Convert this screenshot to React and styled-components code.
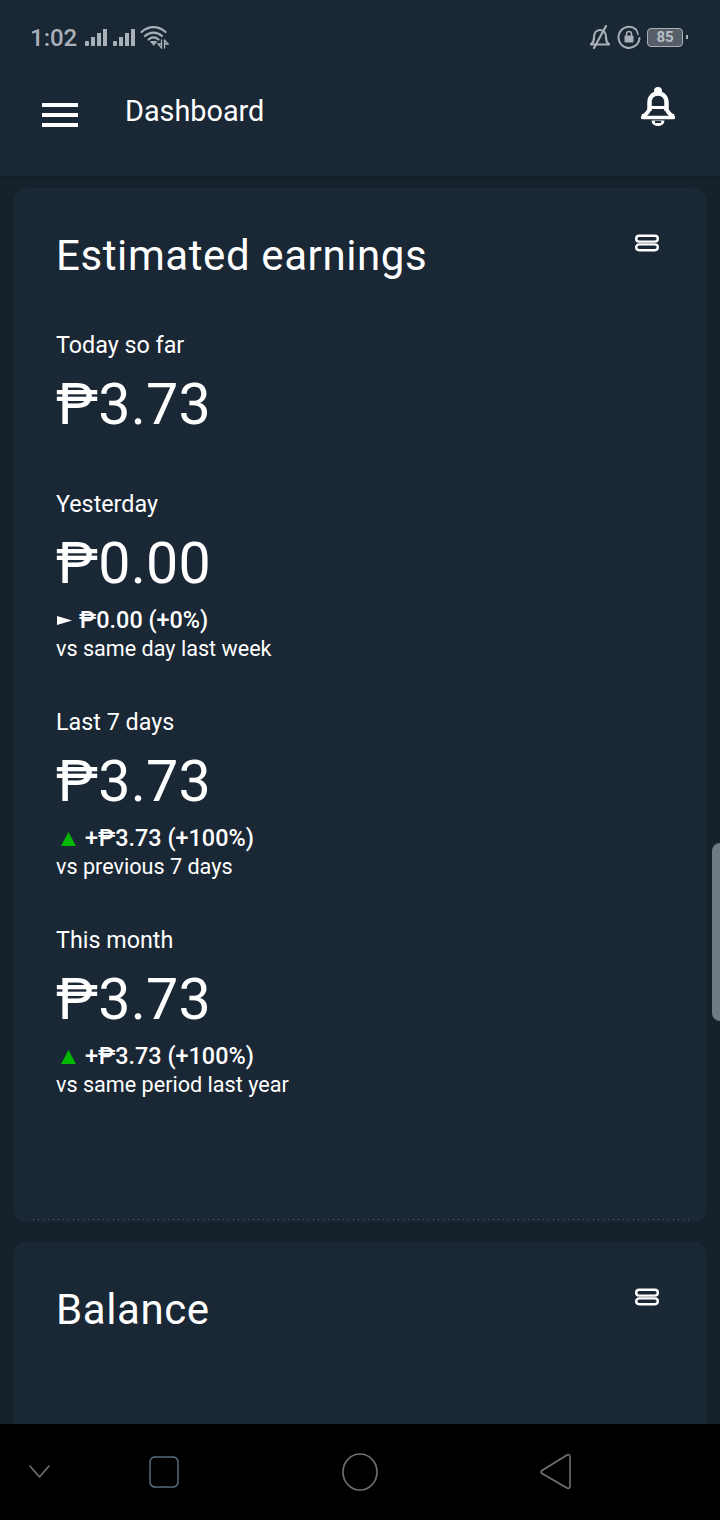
import React from "react";
import styled, { createGlobalStyle } from "styled-components";

const GlobalStyle = createGlobalStyle`
  html, body {
    margin: 0;
    padding: 0;
    background: #16212c;
  }
  body {
    font-family: Roboto, "Liberation Sans", sans-serif;
    color: #fff;
  }
`;

const Screen = styled.div`
  position: relative;
  width: 720px;
  height: 1520px;
  display: flex;
  flex-direction: column;
  overflow: hidden;
  background: #16212c;
`;

const Header = styled.header`
  height: 176px;
  flex: none;
  background: #1a2735;
  display: flex;
  flex-direction: column;
  box-shadow: 0 2px 4px rgba(0, 0, 0, 0.12);
`;

const StatusBar = styled.div`
  height: 72px;
  padding: 2px 31px 0 30px;
  box-sizing: border-box;
  display: flex;
  align-items: center;
  justify-content: space-between;
  color: #a9b0b8;
`;

const StatusGroup = styled.div`
  display: flex;
  align-items: center;
  gap: ${(p) => p.$gap || 5}px;
`;

const Clock = styled.span`
  font-size: 24px;
  font-weight: 500;
  margin-right: 3px;
  padding-top: 2px;
`;

const Battery = styled.div`
  position: relative;
  width: 36px;
  height: 19px;
  box-sizing: border-box;
  border: 1.5px solid #a9b0b8;
  border-radius: 4px;
  background: #565f68;
  color: #b9bfc5;
  font-size: 15px;
  font-weight: 700;
  line-height: 16px;
  text-align: center;
  margin-right: 6px;
  &::after {
    content: "";
    position: absolute;
    right: -6px;
    top: 6px;
    width: 2px;
    height: 4px;
    background: #a9b0b8;
  }
`;

const AppBar = styled.div`
  height: 78px;
  padding: 0 45px 0 42px;
  display: flex;
  align-items: center;
`;

const Menu = styled.div`
  width: 36px;
  display: flex;
  flex-direction: column;
  gap: 6px;
  margin-right: 47px;
  margin-top: 8px;
  span {
    height: 4px;
    background: #fff;
  }
`;

const PageTitle = styled.div`
  flex: 1;
  font-size: 28.8px;
  line-height: 34px;
`;

const Content = styled.main`
  flex: 1;
  min-height: 0;
  overflow: hidden;
  padding: 12px 13px 0;
  display: flex;
  flex-direction: column;
  gap: 20px;
`;

const Card = styled.section`
  position: relative;
  flex: none;
  box-sizing: border-box;
  height: ${(p) => p.$height}px;
  background: #1a2735;
  border-radius: 14px;
  padding: 44px 43px 0;
`;

const DottedEdge = styled.div`
  position: absolute;
  left: 20px;
  right: 17px;
  bottom: 2px;
  height: 1px;
  background: repeating-linear-gradient(90deg, #5a6874 0 1px, transparent 1px 5px);
`;

const CardTitle = styled.h2`
  margin: 0;
  font-size: 42px;
  font-weight: 400;
  line-height: 48px;
  letter-spacing: 0.6px;
`;

const Collapse = styled.svg`
  position: absolute;
  top: 46px;
  right: 48px;
`;

const Metric = styled.div`
  margin-top: ${(p) => p.$top}px;
`;

const Label = styled.div`
  font-size: 23.3px;
  line-height: 28px;
`;

const Amount = styled.div`
  font-size: 57.4px;
  line-height: 66px;
  margin-top: 13px;
  letter-spacing: 0.2px;
`;

const Delta = styled.div`
  display: flex;
  align-items: center;
  font-size: 23.4px;
  font-weight: 500;
  line-height: 29px;
  margin-top: 9px;
`;

const Arrow = styled.svg`
  flex: none;
  margin-right: ${(p) => p.$gap}px;
  margin-left: ${(p) => p.$left}px;
`;

const Note = styled.div`
  font-size: 21.6px;
  line-height: 28px;
`;

const Scrollbar = styled.div`
  position: absolute;
  right: 0;
  top: 843px;
  width: 8px;
  height: 178px;
  background: #6f7a84;
  border-radius: 8px 0 0 8px;
`;

const NavBar = styled.nav`
  height: 96px;
  flex: none;
  background: #000;
  display: grid;
  grid-template-columns: 80px 168px 224px 168px 80px;
  align-items: center;
  justify-items: center;
`;

const NavIcon = styled.svg`
  fill: none;
  stroke: ${(p) => p.$stroke || "#6f7276"};
  stroke-width: 1.6;
  stroke-linecap: round;
  stroke-linejoin: round;
`;

const Signal = () => (
  <svg width="24" height="20" viewBox="0 0 24 20" fill="#a9b0b8">
    <rect x="1" y="14" width="4" height="5" rx="1" />
    <rect x="7" y="10" width="4" height="9" />
    <rect x="13" y="6" width="4" height="13" />
    <rect x="19" y="2" width="4" height="17" />
  </svg>
);

const Wifi = () => (
  <svg width="30" height="24" viewBox="0 0 30 24" fill="none" stroke="#a9b0b8" strokeWidth="2.2" strokeLinecap="round">
    <path d="M1.500 7C8.500 0.500 18.500 0.500 25.500 7" />
    <path d="M5 11C10 6.500 17 6.500 22 11" />
    <path d="M8.500 14.500C11.500 12 15.500 12 18.500 14.500" />
    <path d="M13.500 20l-3-3.500h6z" fill="#a9b0b8" strokeWidth="1" />
    <path d="M21.500 15v8l-3.500-4h3.500M24.500 15v8M24.500 15l3.500 4h-3.500" strokeWidth="1.300" />
  </svg>
);

const BellMuted = () => (
  <svg width="22" height="24" viewBox="0 0 22 24" fill="none" stroke="#a9b0b8" strokeWidth="2.2" strokeLinecap="round" strokeLinejoin="round">
    <path d="M2 19.500c2-1.500 3-3.500 3-7 0-4 2.200-7.500 6-7.500s6 3.500 6 7.500c0 3.500 1 5.500 3 7z" />
    <path d="M17 1L5 23" />
  </svg>
);

const RotationLock = () => (
  <svg width="24" height="24" viewBox="0 0 24 24" fill="none" stroke="#a9b0b8" strokeWidth="2" strokeLinecap="round">
    <path d="M19 4.500A10.500 10.500 0 1 0 22.500 13" />
    <path d="M21 9.500a10 10 0 0 0-1.500-4" strokeWidth="1.500" />
    <rect x="7.500" y="10.500" width="9" height="7" rx="1" fill="#a9b0b8" stroke="none" />
    <path d="M9.500 10.500V9a2.500 2.500 0 0 1 5 0v1.500" strokeWidth="1.500" />
  </svg>
);

const BellLarge = () => (
  <svg width="34" height="40" viewBox="0 0 34 40" fill="none" stroke="#fff" strokeLinejoin="round" style={{ marginBottom: 8 }}>
    <circle cx="17" cy="4" r="4" fill="#fff" stroke="none" />
    <path d="M8.500 24V15.500C8.500 10 12 6.500 17 6.500s8.500 3.500 8.500 9V24" strokeWidth="4.500" />
    <path d="M1 29.500c3-1 5.500-3 7-6.500M33 29.500c-3-1-5.500-3-7-6.500" strokeWidth="4" />
    <path d="M8 20.500h18" strokeWidth="3" />
    <path d="M1.500 30.500h31" strokeWidth="3.500" strokeLinecap="round" />
    <path d="M10.500 33.500a6.500 5.500 0 0 0 13 0z" fill="#fff" strokeWidth="0" />
    <path d="M14 35h6" stroke="#1a2735" strokeWidth="2" />
  </svg>
);

const StackIcon = () => (
  <Collapse width="24" height="18" viewBox="0 0 24 18" fill="none" stroke="#fff" strokeWidth="2.4">
    <rect x="1.200" y="1.800" width="21.600" height="5.800" rx="2.900" />
    <rect x="1.200" y="10.400" width="21.600" height="5.800" rx="2.900" />
  </Collapse>
);

const earnings = [
  { label: "Today so far", amount: "₱3.73", top: 51 },
  { label: "Yesterday", amount: "₱0.00", top: 52, delta: "₱0.00 (+0%)", note: "vs same day last week", trend: "flat" },
  { label: "Last 7 days", amount: "₱3.73", top: 45, delta: "+₱3.73 (+100%)", note: "vs previous 7 days", trend: "up" },
  { label: "This month", amount: "₱3.73", top: 45, delta: "+₱3.73 (+100%)", note: "vs same period last year", trend: "up" },
];

const TrendArrow = ({ trend }) =>
  trend === "up" ? (
    <Arrow $left={5} $gap={9} width="15" height="14" viewBox="0 0 15 14">
      <path d="M7.500 0L15 14H0z" fill="#03b803" />
    </Arrow>
  ) : (
    <Arrow $left={1} $gap={7} width="15" height="9" viewBox="0 0 15 9">
      <path d="M0 0l15 4.500L0 9z" fill="#fff" />
    </Arrow>
  );

export default function App() {
  return (
    <Screen>
      <GlobalStyle />
      <Header>
        <StatusBar>
          <StatusGroup $gap={4}>
            <Clock>1:02</Clock>
            <Signal />
            <Signal />
            <Wifi />
          </StatusGroup>
          <StatusGroup $gap={6}>
            <BellMuted />
            <RotationLock />
            <Battery>85</Battery>
          </StatusGroup>
        </StatusBar>
        <AppBar>
          <Menu>
            <span />
            <span />
            <span />
          </Menu>
          <PageTitle>Dashboard</PageTitle>
          <BellLarge />
        </AppBar>
      </Header>
      <Content>
        <Card $height={1034}>
          <CardTitle>Estimated earnings</CardTitle>
          <StackIcon />
          {earnings.map((item) => (
            <Metric key={item.label} $top={item.top}>
              <Label>{item.label}</Label>
              <Amount>{item.amount}</Amount>
              {item.delta && (
                <>
                  <Delta>
                    <TrendArrow trend={item.trend} />
                    {item.delta}
                  </Delta>
                  <Note>{item.note}</Note>
                </>
              )}
            </Metric>
          ))}
          <DottedEdge />
        </Card>
        <Card $height={300}>
          <CardTitle>Balance</CardTitle>
          <StackIcon />
        </Card>
      </Content>
      <Scrollbar />
      <NavBar>
        <NavIcon width="24" height="20" viewBox="0 0 24 20">
          <path d="M2 4l9.500 11L21 4" />
        </NavIcon>
        <NavIcon $stroke="#5b6d7c" width="32" height="34" viewBox="0 0 32 34">
          <rect x="2" y="2" width="28" height="30" rx="5" strokeDasharray="1.500 1" />
        </NavIcon>
        <NavIcon width="38" height="40" viewBox="0 0 38 40">
          <ellipse cx="19" cy="20" rx="17" ry="18" />
        </NavIcon>
        <NavIcon width="34" height="40" viewBox="0 0 34 40">
          <path d="M3 18.500L28 3c2-1 3 0 3 2v29c0 2-1 3-3 2L3 21.500c-1.500-1-1.500-2 0-3z" />
        </NavIcon>
        <span />
      </NavBar>
    </Screen>
  );
}
